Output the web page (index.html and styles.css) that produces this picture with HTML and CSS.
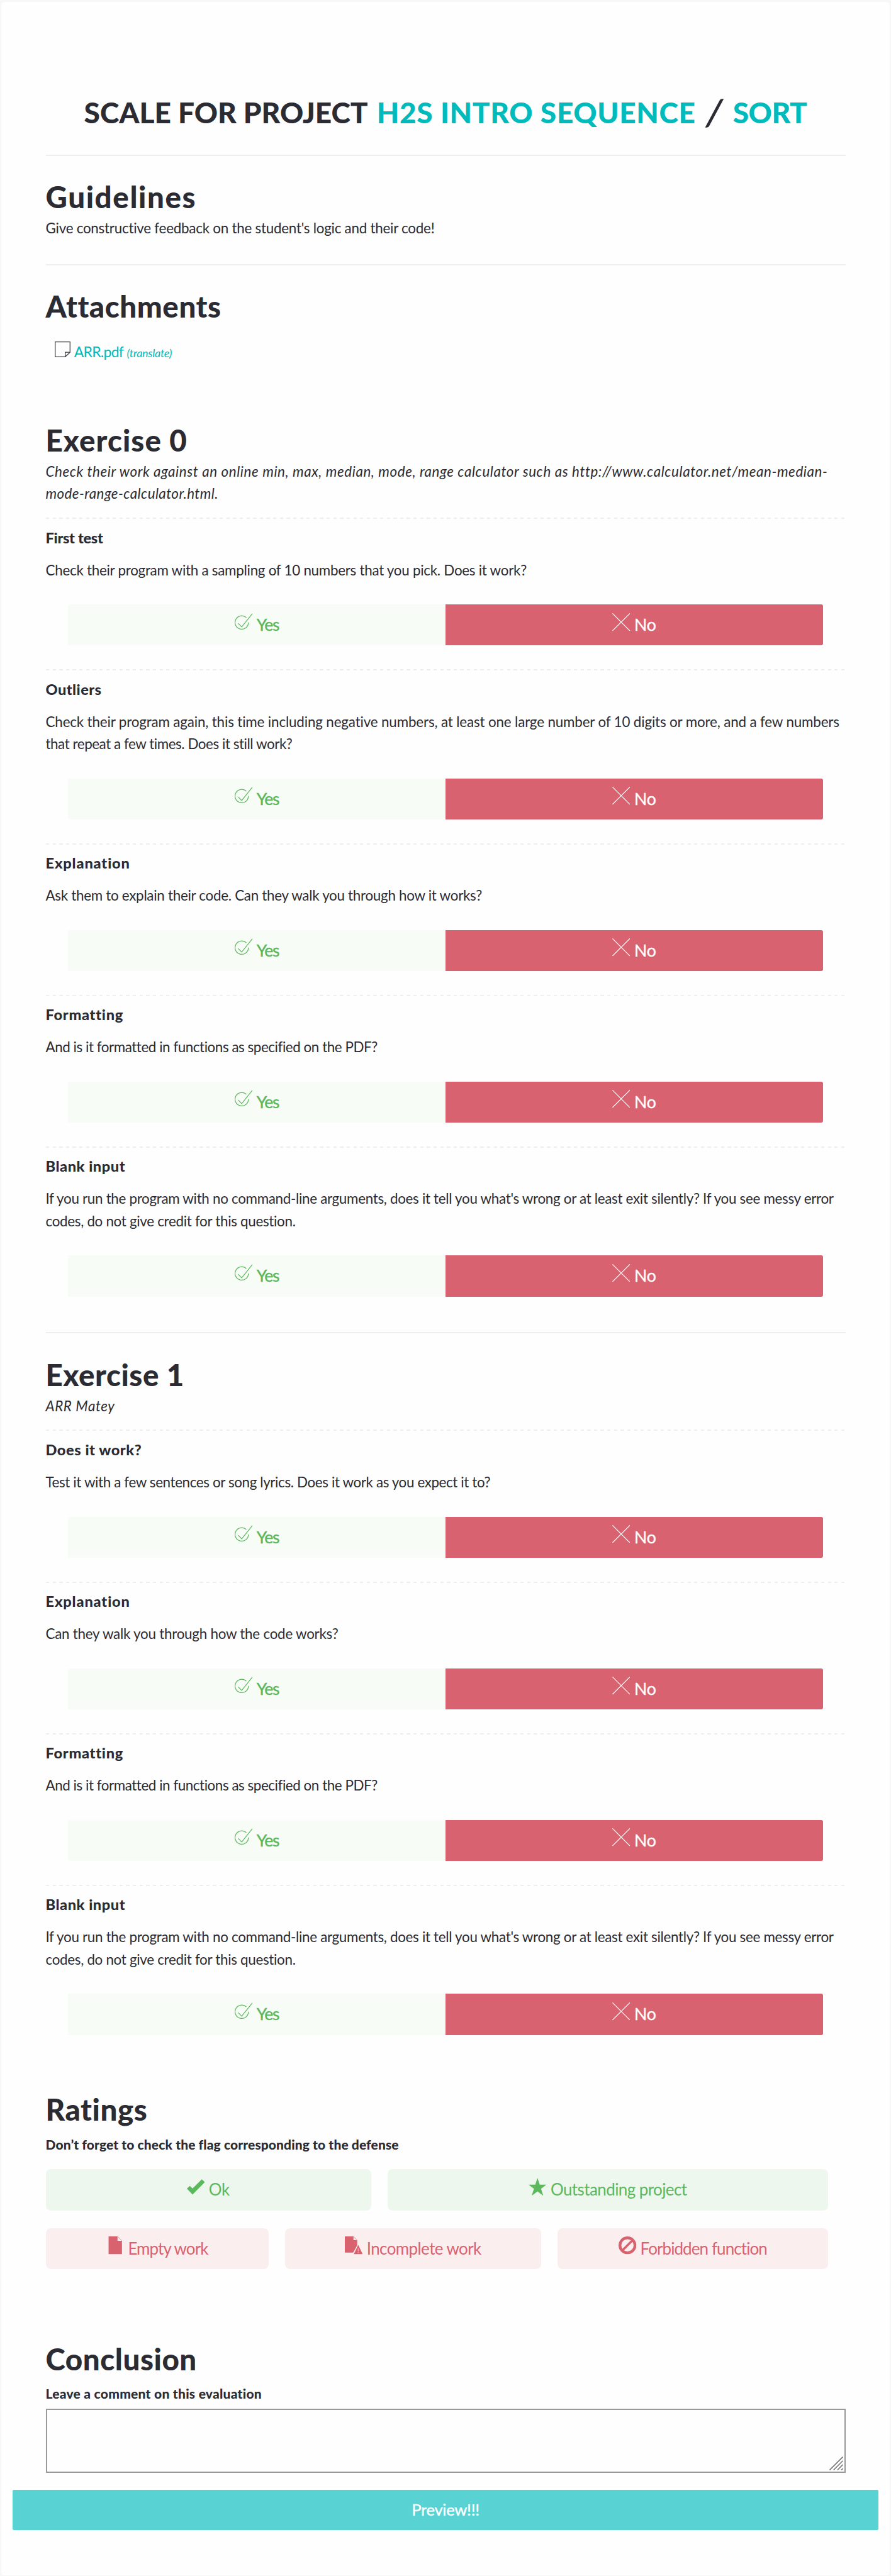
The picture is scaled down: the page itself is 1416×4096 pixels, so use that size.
FILE: index.html
```
<!DOCTYPE html>
<html lang="en">
<head>
<meta charset="utf-8">
<title>Scale for project H2S Intro Sequence / Sort</title>
<link rel="stylesheet" href="styles.css">
</head>
<body>
<svg class="sprite" aria-hidden="true">
  <symbol id="i-yes" viewBox="0 0 32 32"><path d="M20.8 7.9A12 12 0 1 0 24.6 16.6M6.2 18.2l6.3 6.4L32 .4" fill="none" stroke="currentColor" stroke-width="1.400"/></symbol>
  <symbol id="i-no" viewBox="0 0 32 32"><path d="M.4.4l31.2 31.2M31.6.4L.4 31.6" fill="none" stroke="currentColor" stroke-width="1.300"/></symbol>
  <symbol id="i-page" viewBox="0 0 28 28"><path d="M.8.8h26.4v18.6l-8.600 7.800H.8zM18.6 27v-7.800h8.400" fill="none" stroke="#3c3c44" stroke-width="1.400"/></symbol>
  <symbol id="i-check" viewBox="0 0 32 32"><path d="M0 19.3l5.2-4.8 5 4.4L26.7 2.6 32 7.6 10.2 29.8z" fill="currentColor"/></symbol>
  <symbol id="i-star" viewBox="0 0 32 32"><path d="M16 0l4 12.2h12l-9.7 7.2L26.4 32 16 24.3 5.6 32l4.1-12.6L0 12.2h12z" fill="currentColor"/></symbol>
  <symbol id="i-doc" viewBox="0 0 32 32"><path d="M4 0h16v8h8v24H4z" fill="currentColor"/><path d="M20.5.5l7.200 7.200" stroke="currentColor" stroke-width=".8"/></symbol>
  <symbol id="i-docwarn" viewBox="0 0 32 32"><path d="M0 0h15.5v6.8h6.7V16L15 29H0z" fill="currentColor"/><path d="M15.8.5l6 6" stroke="currentColor" stroke-width=".8"/><path d="M24 13.5L14.6 32h18.8z" fill="#fbeeef"/><path d="M24 15.2L32 32H16z" fill="currentColor"/><path d="M24 21.5v5M24 28v1.6" stroke="#f0b9bf" stroke-width="1.4"/></symbol>
  <symbol id="i-ban" viewBox="0 0 32 32"><circle cx="16" cy="16" r="13.5" fill="none" stroke="currentColor" stroke-width="5"/><path d="M7 25L25 7" stroke="currentColor" stroke-width="4"/></symbol>
</svg>
<main class="page">
  <h1 class="title"><span>SCALE FOR PROJECT</span><a class="t-a">H2S INTRO SEQUENCE</a><span class="slash">/</span><a class="t-b">SORT</a></h1>
  <hr class="rule rule-title">
  <section class="guidelines">
    <h2 class="t-guidelines">Guidelines</h2>
    <p class="intro t-29">Give constructive feedback on the student's logic and their code!</p>
  </section>
  <hr class="rule rule-guidelines">
  <section class="attachments">
    <h2>Attachments</h2>
    <div class="file"><svg class="file-icon"><use href="#i-page"/></svg><a class="file-name">ARR.pdf</a><a class="file-translate">(translate)</a></div>
  </section>

  <section class="exercise exercise-first">
    <h2 class="t-ex0">Exercise 0</h2>
    <p class="intro italic"><span class="t-url">Check their work against an online min, max, median, mode, range calculator such as http://www.calculator.net/mean-median-</span><br><span class="t-url2">mode-range-calculator.html.</span></p>
    <article class="item">
      <h3 class="t-first">First test</h3>
      <p class="t-30">Check their program with a sampling of 10 numbers that you pick. Does it work?</p>
      <div class="answers"><div class="yes"><svg class="icon"><use href="#i-yes"/></svg><span>Yes</span></div><div class="no"><svg class="icon"><use href="#i-no"/></svg><span>No</span></div></div>
    </article>
    <article class="item">
      <h3 class="t-outliers">Outliers</h3>
      <p><span class="t-18">Check their program again, this time including negative numbers, at least one large number of 10 digits or more, and a few numbers</span><br><span class="t-49">that repeat a few times. Does it still work?</span></p>
      <div class="answers"><div class="yes"><svg class="icon"><use href="#i-yes"/></svg><span>Yes</span></div><div class="no"><svg class="icon"><use href="#i-no"/></svg><span>No</span></div></div>
    </article>
    <article class="item">
      <h3 class="t-explanation">Explanation</h3>
      <p class="t-33">Ask them to explain their code. Can they walk you through how it works?</p>
      <div class="answers"><div class="yes"><svg class="icon"><use href="#i-yes"/></svg><span>Yes</span></div><div class="no"><svg class="icon"><use href="#i-no"/></svg><span>No</span></div></div>
    </article>
    <article class="item">
      <h3 class="t-formatting">Formatting</h3>
      <p class="t-49">And is it formatted in functions as specified on the PDF?</p>
      <div class="answers"><div class="yes"><svg class="icon"><use href="#i-yes"/></svg><span>Yes</span></div><div class="no"><svg class="icon"><use href="#i-no"/></svg><span>No</span></div></div>
    </article>
    <article class="item">
      <h3>Blank input</h3>
      <p class="t-34">If you run the program with no command-line arguments, does it tell you what's wrong or at least exit silently? If you see messy error<br>codes, do not give credit for this question.</p>
      <div class="answers"><div class="yes"><svg class="icon"><use href="#i-yes"/></svg><span>Yes</span></div><div class="no"><svg class="icon"><use href="#i-no"/></svg><span>No</span></div></div>
    </article>
  </section>
  <hr class="rule rule-exercise">
  <section class="exercise">
    <h2>Exercise 1</h2>
    <p class="intro italic t-url">ARR Matey</p>
    <article class="item">
      <h3>Does it work?</h3>
      <p class="t-42">Test it with a few sentences or song lyrics. Does it work as you expect it to?</p>
      <div class="answers"><div class="yes"><svg class="icon"><use href="#i-yes"/></svg><span>Yes</span></div><div class="no"><svg class="icon"><use href="#i-no"/></svg><span>No</span></div></div>
    </article>
    <article class="item">
      <h3 class="t-explanation">Explanation</h3>
      <p class="t-29">Can they walk you through how the code works?</p>
      <div class="answers"><div class="yes"><svg class="icon"><use href="#i-yes"/></svg><span>Yes</span></div><div class="no"><svg class="icon"><use href="#i-no"/></svg><span>No</span></div></div>
    </article>
    <article class="item">
      <h3 class="t-formatting">Formatting</h3>
      <p class="t-49">And is it formatted in functions as specified on the PDF?</p>
      <div class="answers"><div class="yes"><svg class="icon"><use href="#i-yes"/></svg><span>Yes</span></div><div class="no"><svg class="icon"><use href="#i-no"/></svg><span>No</span></div></div>
    </article>
    <article class="item">
      <h3>Blank input</h3>
      <p class="t-34">If you run the program with no command-line arguments, does it tell you what's wrong or at least exit silently? If you see messy error<br>codes, do not give credit for this question.</p>
      <div class="answers"><div class="yes"><svg class="icon"><use href="#i-yes"/></svg><span>Yes</span></div><div class="no"><svg class="icon"><use href="#i-no"/></svg><span>No</span></div></div>
    </article>
  </section>

  <section class="ratings">
    <h2>Ratings</h2>
    <h4 class="t-dont">Don’t forget to check the flag corresponding to the defense</h4>
    <div class="flags flags-good">
      <div class="flag"><svg class="icon"><use href="#i-check"/></svg><span class="t-ok">Ok</span></div>
      <div class="flag"><svg class="icon"><use href="#i-star"/></svg><span>Outstanding project</span></div>
    </div>
    <div class="flags flags-bad">
      <div class="flag"><svg class="icon"><use href="#i-doc"/></svg><span class="t-tight">Empty work</span></div>
      <div class="flag"><svg class="icon"><use href="#i-docwarn"/></svg><span>Incomplete work</span></div>
      <div class="flag"><svg class="icon"><use href="#i-ban"/></svg><span class="t-tight">Forbidden function</span></div>
    </div>
  </section>
  <section class="conclusion">
    <h2>Conclusion</h2>
    <h4 class="t-leave">Leave a comment on this evaluation</h4>
    <div class="comment">
      <textarea aria-label="Comment"></textarea>
      <svg class="grip" viewBox="0 0 22 22"><path d="M.5 21.5l21-21M6.7 21.5L21.5 6.700M12.9 21.5l8.600-8.600M19 21.5l2.5-2.500" stroke="#777" stroke-width="1.6" fill="none"/></svg>
    </div>
  </section>
  <div class="preview">Preview!!!</div>
</main>
</body>
</html>
```
FILE: styles.css
```
* { box-sizing: border-box; }
html { background: #f7f7f7; }
body {
  margin: 0;
  width: 1416px;
  height: 4096px;
  padding: 3px 2px 1px;
  overflow: hidden;
  font-family: Lato, "Liberation Sans", sans-serif;
  font-size: 22.4px;
  line-height: 35.4px;
  color: #2b2b33;
  background: #f7f7f7;
}
.sprite { position: absolute; width: 0; height: 0; }
.page {
  height: 4092px;
  padding: 146.2px 70.5px 0;
  background: #fefefe;
  border-radius: 5px;
}
h1, h2, h3, h4, p, hr { margin: 0; }
h1, h2, h3, h4 { font-weight: 900; }
h2 { font-size: 47.5px; line-height: 53px; margin-bottom: -1px; letter-spacing: .55px; }
h3 { font-size: 23.6px; line-height: 30px; letter-spacing: .55px; }
h4 { font-size: 21px; line-height: 28px; margin-top: 17.2px; }
p { white-space: nowrap; }

.title {
  display: flex;
  justify-content: center;
  gap: 14px;
  font-size: 46px;
  line-height: 60px;
  white-space: nowrap;
}
.title a, .file a { color: #00babc; }
.slash { width: 31px; text-align: center; font-weight: 700; transform: skewX(-10deg) scale(1.15, 1.25); }

.rule { height: 2px; border: 0; background: #eee; }
.rule-title { margin-top: 36.8px; }
.rule-guidelines { margin-top: 39.3px; }
.rule-exercise { margin-top: 19.3px; }

.guidelines { padding-top: 37.9px; }
.guidelines .intro { margin-top: 7.4px; }
.attachments { padding-top: 38.2px; }
.file { display: flex; align-items: baseline; height: 35.4px; margin-top: 30.2px; padding-left: 14.7px; font-size: 23px; }
.file-icon { width: 25px; height: 25px; }
.file-name { margin-left: 5.5px; letter-spacing: -.75px; }
.file-translate { margin-left: 5.5px; font-size: 18px; font-style: italic; letter-spacing: -.3px; }

.exercise { padding-top: 38.8px; }
.exercise-first { padding-top: 95.6px; }
.exercise .intro { margin: 6.3px 0 20.5px; }
.italic { font-style: italic; }

.item {
  padding: 16.8px 35.7px 37.6px 0;
  background: repeating-linear-gradient(90deg, #eee 0 5.3px, transparent 5.3px 10.62px) top left / 100% 2px no-repeat;
}
.item p { margin-top: 18.8px; }
.answers { display: grid; grid-template-columns: 1fr 1fr; margin: 37.1px 0 0 35.7px; color: #fff; }
.answers > div, .flag {
  display: flex;
  justify-content: center;
  align-items: baseline;
  gap: 6.5px;
  height: 65.4px;
  font-size: 26.6px;
  line-height: 65.6px;
}
.icon { width: 28.4px; height: 28.4px; }
.yes { color: #5cb85c; background: #f7fcf7; }
.yes span { letter-spacing: -1.3px; -webkit-text-stroke: .4px currentColor; }
.no { background: #d8626f; border-radius: 0 3px 3px 0; }
.no span { letter-spacing: -.1px; -webkit-text-stroke: .4px currentColor; }

.ratings { padding-top: 53.8px; }
.flags { display: grid; column-gap: 26.5px; width: 1243px; }
.flags-good { grid-template-columns: 517px 1fr; margin-top: 25.1px; }
.flags-bad { grid-template-columns: 354px 406.5px 1fr; margin-top: 28.2px; }
.flag { border-radius: 8px; font-size: 26px; letter-spacing: -.6px; white-space: nowrap; }
.flags-good .flag { color: #5cb85c; background: #eef7ee; }
.flags-bad .flag { color: #d9626f; background: #fbeeef; }

.conclusion { padding-top: 115.3px; }
.conclusion h4 { margin-top: 16.1px; }
.comment { position: relative; margin-top: 10.7px; height: 101.7px; }
textarea { display: block; width: 100%; height: 100%; border: 2px solid #999; background: transparent; resize: none; }
.grip { position: absolute; right: 4px; bottom: 4px; width: 22px; height: 22px; }
.preview {
  margin: 26.6px -52.4px 0;
  height: 64.6px;
  border-radius: 2px;
  background: #58d2d3;
  color: #fff;
  font-size: 25.6px;
  line-height: 63.5px;
  letter-spacing: -.3px;
  text-align: center;
  -webkit-text-stroke: .4px currentColor;
}

/* Tracking per line of text */
.t-a { letter-spacing: .68px; }
.t-b { letter-spacing: -.46px; }
.t-guidelines { letter-spacing: 1.6px; }
.t-ex0 { letter-spacing: 1.05px; }
.t-first { letter-spacing: -.3px; }
.t-outliers { letter-spacing: .45px; }
.t-explanation { letter-spacing: .85px; }
.t-formatting { letter-spacing: .7px; }
.t-18 { letter-spacing: -.16px; }
.t-29 { letter-spacing: -.25px; }
.t-30 { letter-spacing: -.27px; }
.t-33 { letter-spacing: -.29px; }
.t-34 { letter-spacing: -.31px; }
.t-42 { letter-spacing: -.38px; }
.t-49 { letter-spacing: -.45px; }
.t-url { letter-spacing: .59px; }
.t-url2 { letter-spacing: .42px; }
.t-dont { letter-spacing: .1px; }
.t-leave { letter-spacing: .25px; }
.t-ok { letter-spacing: -.2px; }
.t-tight { letter-spacing: -.92px; }
```
